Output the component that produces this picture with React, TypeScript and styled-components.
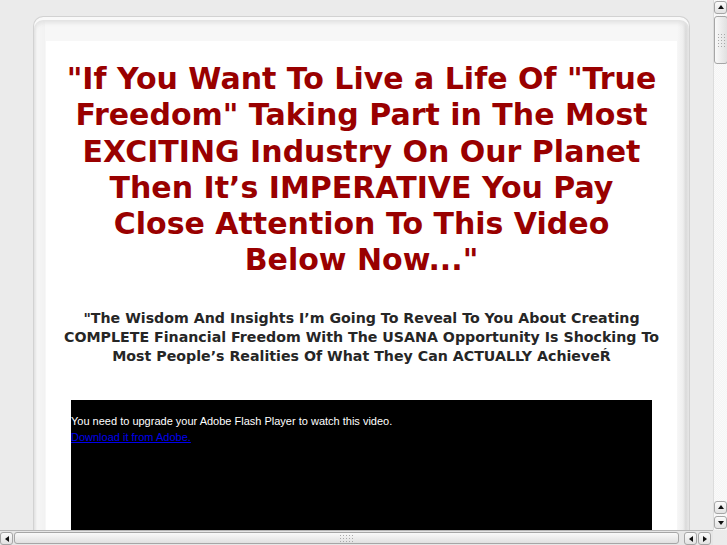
import React from "react";
import styled, { createGlobalStyle } from "styled-components";

const GlobalStyle = createGlobalStyle`
  html, body {
    margin: 0;
    padding: 0;
    overflow: hidden;
    background: #ebebeb;
  }
`;

const Viewport = styled.div`
  display: grid;
  grid-template-columns: 1fr 15px;
  grid-template-rows: 1fr 15px;
  width: 727px;
  height: 545px;
  overflow: hidden;
`;

const PageArea = styled.div`
  overflow: hidden;
  padding: 16px 0 0 33px;
  background: #ebebeb;
`;

const Frame = styled.div`
  width: 657px;
  box-sizing: border-box;
  padding: 24px 12px 0 12px;
  border-radius: 10px 10px 0 0;
  border: 1px solid #d2d2d2;
  border-bottom: none;
  background: linear-gradient(
    to right,
    #e4e4e4 0px,
    #f6f6f6 3px,
    #f2f2f2 11px,
    #f7f7f7 11px,
    #f7f7f7 calc(100% - 12px),
    #eeeeee calc(100% - 6px),
    #d9d9d9 calc(100% - 3px),
    #eaeaea 100%
  );
  box-shadow: inset 0 3px 0 #f9f9f9, inset 0 6px 4px #e2e2e2;
`;

const Content = styled.div`
  background: #ffffff;
  padding: 20px 0 0;
  height: 600px;
  text-align: center;
`;

const Headline = styled.h1`
  margin: 0 auto;
  width: 596px;
  font-family: "DejaVu Sans", Verdana, sans-serif;
  font-weight: bold;
  font-size: 30px;
  line-height: 36.3px;
  color: #990000;
`;

const Lead = styled.p`
  margin: 30px auto 0;
  width: 606px;
  font-family: "DejaVu Sans", Verdana, sans-serif;
  font-weight: bold;
  font-size: 14.2px;
  line-height: 19px;
  color: #262626;
`;

const Video = styled.div`
  margin: 34px auto 0;
  width: 581px;
  height: 300px;
  background: #000000;
  padding-top: 13px;
  box-sizing: border-box;
  text-align: left;
  font-family: "Liberation Sans", Arial, sans-serif;
  font-size: 11px;
  line-height: 16px;
  color: #ffffff;

  a {
    color: #0000ee;
    text-decoration: underline;
  }
`;

const VBar = styled.div`
  display: flex;
  flex-direction: column;
  background: repeating-conic-gradient(#f4f4f4 0 25%, #fafafa 0 50%) 0 0 / 2px 2px;
  border-left: 1px solid #dcdcdc;
  box-sizing: border-box;
`;

const HBar = styled.div`
  display: flex;
  align-items: stretch;
  background: #e6e6e6;
  border-top: 1px solid #b5b5b5;
  box-sizing: border-box;
  gap: 1px;
`;

const Corner = styled.div`
  background: #ebebeb;
`;

const ArrowButton = styled.div<{ $dir: "up" | "down" | "left" | "right" }>`
  flex: 0 0 auto;
  width: 13px;
  height: 13px;
  margin: 1px 0;
  border: 1px solid #a6a6a6;
  border-radius: 3px;
  box-sizing: border-box;
  background: linear-gradient(#fbfbfb, #e2e2e2);
  display: flex;
  align-items: center;
  justify-content: center;

  &::after {
    content: "";
    width: 0;
    height: 0;
    border: 3px solid transparent;
    ${({ $dir }) =>
      $dir === "up"
        ? "border-bottom: 4px solid #111; border-top-width: 0; margin-top: -1px;"
        : $dir === "down"
        ? "border-top: 4px solid #111; border-bottom-width: 0;"
        : $dir === "left"
        ? "border-right: 4px solid #111; border-left-width: 0;"
        : "border-left: 4px solid #111; border-right-width: 0;"}
  }
`;

const VThumb = styled.div`
  height: 46px;
  margin: 1px 0;
  border: 1px solid #a6a6a6;
  border-radius: 3px;
  background: linear-gradient(to right, #f9f9f9, #e0e0e0);
  display: flex;
  align-items: center;
  justify-content: center;
`;

const HThumb = styled.div`
  flex: 0 0 663px;
  margin: 1px 0;
  border: 1px solid #a6a6a6;
  border-radius: 3px;
  background: linear-gradient(#f9f9f9, #e0e0e0);
  display: flex;
  align-items: center;
  justify-content: center;
`;

const Grip = styled.div<{ $w: number; $h: number }>`
  width: ${({ $w }) => $w}px;
  height: ${({ $h }) => $h}px;
  background: radial-gradient(circle, #a9a9a9 0.7px, transparent 0.9px) 0 0 / 3px 3px;
`;

const Spacer = styled.div`
  flex: 1;
`;

const HButtons = styled.div`
  display: flex;
  gap: 1px;
  margin-left: 4px;
  margin-right: 2px;
`;

export default function App() {
  return (
    <>
      <GlobalStyle />
      <Viewport>
        <PageArea>
          <Frame>
            <Content>
              <Headline>
                "If You Want To Live a Life Of "True Freedom" Taking Part in The
                Most EXCITING Industry On Our Planet Then It’s IMPERATIVE You
                Pay Close Attention To This Video Below Now..."
              </Headline>
              <Lead>
                "The Wisdom And Insights I’m Going To Reveal To You About
                Creating COMPLETE Financial Freedom With The USANA Opportunity Is
                Shocking To Most People’s Realities Of What They Can ACTUALLY
                AchieveŔ
              </Lead>
              <Video>
                You need to upgrade your Adobe Flash Player to watch this video.
                <br />
                <a href="#">Download it from Adobe.</a>
              </Video>
            </Content>
          </Frame>
        </PageArea>
        <VBar>
          <ArrowButton $dir="up" />
          <VThumb>
            <Grip $w={9} $h={15} />
          </VThumb>
          <Spacer />
          <ArrowButton $dir="up" />
          <ArrowButton $dir="down" />
        </VBar>
        <HBar>
          <ArrowButton $dir="left" />
          <HThumb>
            <Grip $w={15} $h={9} />
          </HThumb>
          <HButtons>
            <ArrowButton $dir="left" />
            <ArrowButton $dir="right" />
          </HButtons>
        </HBar>
        <Corner />
      </Viewport>
    </>
  );
}
